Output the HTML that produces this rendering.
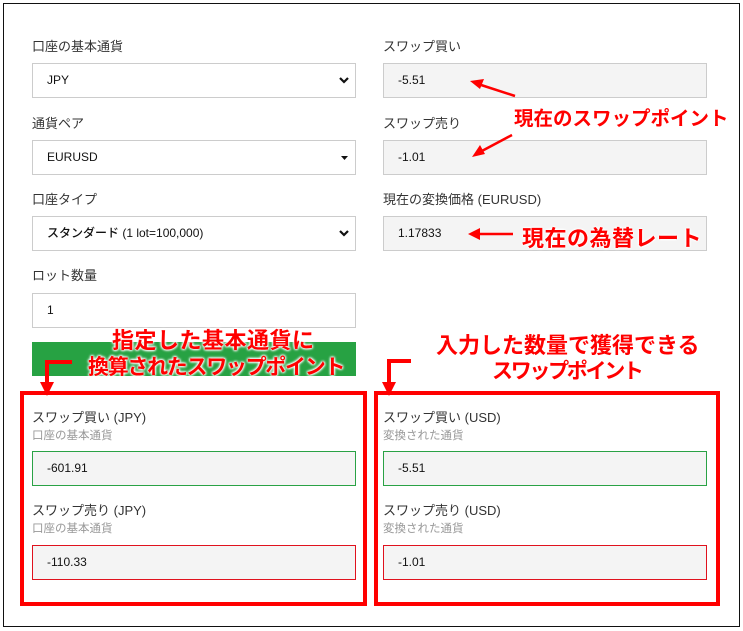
<!DOCTYPE html>
<html><head><meta charset="utf-8"><style>
*{margin:0;padding:0;box-sizing:border-box}
body{width:743px;height:631px;background:#fff;position:relative;overflow:hidden;font-family:"Liberation Sans","Noto Sans CJK JP",sans-serif;color:#222}
.frame{position:absolute;left:3px;top:3px;width:737px;height:624px;border:1.5px solid #111}
.lbl{position:absolute;font-size:13px;color:#333}
.sub{position:absolute;font-size:11.5px;color:#999}
.inp{position:absolute;height:35px;border:1px solid #ccc;font-size:12px;padding-left:14px;line-height:33px;color:#111;font-weight:500}
.w{background:#fff}.g{background:#f4f4f4}
.chev{position:absolute;right:6px;top:12px}
.ann{position:absolute;color:#f00;font-weight:bold;font-family:"Noto Sans CJK JP",sans-serif;white-space:nowrap;text-shadow:0 0 2px #fff,0 0 2px #fff,0 0 3px #fff,0 0 3px #fff}
.rb{position:absolute;border:4px solid #f00}
</style></head><body>
<div class="frame"></div>

<div class="lbl" style="left:32px;top:36px">口座の基本通貨</div>
<div class="inp w" style="left:32px;top:63px;width:324px">JPY<svg class="chev" width="10" height="8" viewBox="0 0 10 8"><path d="M1 2l4 4 4-4" stroke="#111" stroke-width="2.2" fill="none"/></svg></div>
<div class="lbl" style="left:32px;top:113px">通貨ペア</div>
<div class="inp w" style="left:32px;top:140px;width:324px">EURUSD<svg class="chev" width="10" height="8" viewBox="0 0 10 8" style="top:14px;right:5px"><path d="M1 1h7l-3.5 4z" fill="#111"/></svg></div>
<div class="lbl" style="left:32px;top:189px">口座タイプ</div>
<div class="inp w" style="left:32px;top:216px;width:324px">スタンダード (1 lot=100,000)<svg class="chev" width="10" height="8" viewBox="0 0 10 8"><path d="M1 2l4 4 4-4" stroke="#111" stroke-width="2.2" fill="none"/></svg></div>
<div class="lbl" style="left:32px;top:265px">ロット数量</div>
<div class="inp w" style="left:32px;top:293px;width:324px">1</div>
<div style="position:absolute;left:32px;top:342px;width:324px;height:34px;background:#27a243"></div>

<div class="lbl" style="left:383px;top:36px">スワップ買い</div>
<div class="inp g" style="left:383px;top:63px;width:324px">-5.51</div>
<div class="lbl" style="left:383px;top:113px">スワップ売り</div>
<div class="inp g" style="left:383px;top:140px;width:324px">-1.01</div>
<div class="lbl" style="left:383px;top:189px">現在の変換価格 (EURUSD)</div>
<div class="inp g" style="left:383px;top:216px;width:324px">1.17833</div>

<div class="rb" style="left:20px;top:391px;width:347px;height:215px"></div>
<div class="rb" style="left:374px;top:391px;width:346px;height:215px"></div>

<div class="lbl" style="left:32px;top:407px">スワップ買い (JPY)</div>
<div class="sub" style="left:32px;top:427px">口座の基本通貨</div>
<div class="inp g" style="left:32px;top:451px;width:324px;border-color:#2aa245">-601.91</div>
<div class="lbl" style="left:32px;top:500px">スワップ売り (JPY)</div>
<div class="sub" style="left:32px;top:520px">口座の基本通貨</div>
<div class="inp g" style="left:32px;top:545px;width:324px;border-color:#e0121e">-110.33</div>

<div class="lbl" style="left:383px;top:407px">スワップ買い (USD)</div>
<div class="sub" style="left:383px;top:427px">変換された通貨</div>
<div class="inp g" style="left:383px;top:451px;width:324px;border-color:#2aa245">-5.51</div>
<div class="lbl" style="left:383px;top:500px">スワップ売り (USD)</div>
<div class="sub" style="left:383px;top:520px">変換された通貨</div>
<div class="inp g" style="left:383px;top:545px;width:324px;border-color:#e0121e">-1.01</div>

<svg style="position:absolute;left:0;top:0" width="743" height="631">
<g stroke="#f00" stroke-width="2.5" fill="#f00">
<line x1="515" y1="96" x2="478" y2="84"/><path d="M470 81l14 -2 -4 10z" stroke="none"/>
<line x1="512" y1="135" x2="480" y2="152"/><path d="M472 157l8 -12 5 9z" stroke="none"/>
<line x1="513" y1="234" x2="478" y2="234"/><path d="M468 234l12 -6v12z" stroke="none"/>
</g>
<g stroke="#f00" stroke-width="4" fill="none"><path d="M72 362H47V384"/><path d="M411 361H389V384"/></g>
<path d="M40 382h14l-7 14z" fill="#f00"/><path d="M382 382h14l-7 14z" fill="#f00"/>
</svg>

<div class="ann" style="left:514px;top:102px;font-size:19.5px">現在のスワップポイント</div>
<div class="ann" style="left:522px;top:221px;font-size:22px;letter-spacing:0.5px">現在の為替レート</div>
<div class="ann" style="left:112px;top:326px;font-size:22px;line-height:27px;letter-spacing:0.5px">指定した基本通貨に</div>
<div class="ann" style="left:88px;top:353px;font-size:21px;line-height:27px;letter-spacing:-1.3px">換算されたスワップポイント</div>
<div class="ann" style="left:436px;top:331px;font-size:22px;line-height:27px">入力した数量で獲得できる</div>
<div class="ann" style="left:492px;top:357px;font-size:21px;line-height:27px;letter-spacing:-2.3px">スワップポイント</div>
</body></html>
